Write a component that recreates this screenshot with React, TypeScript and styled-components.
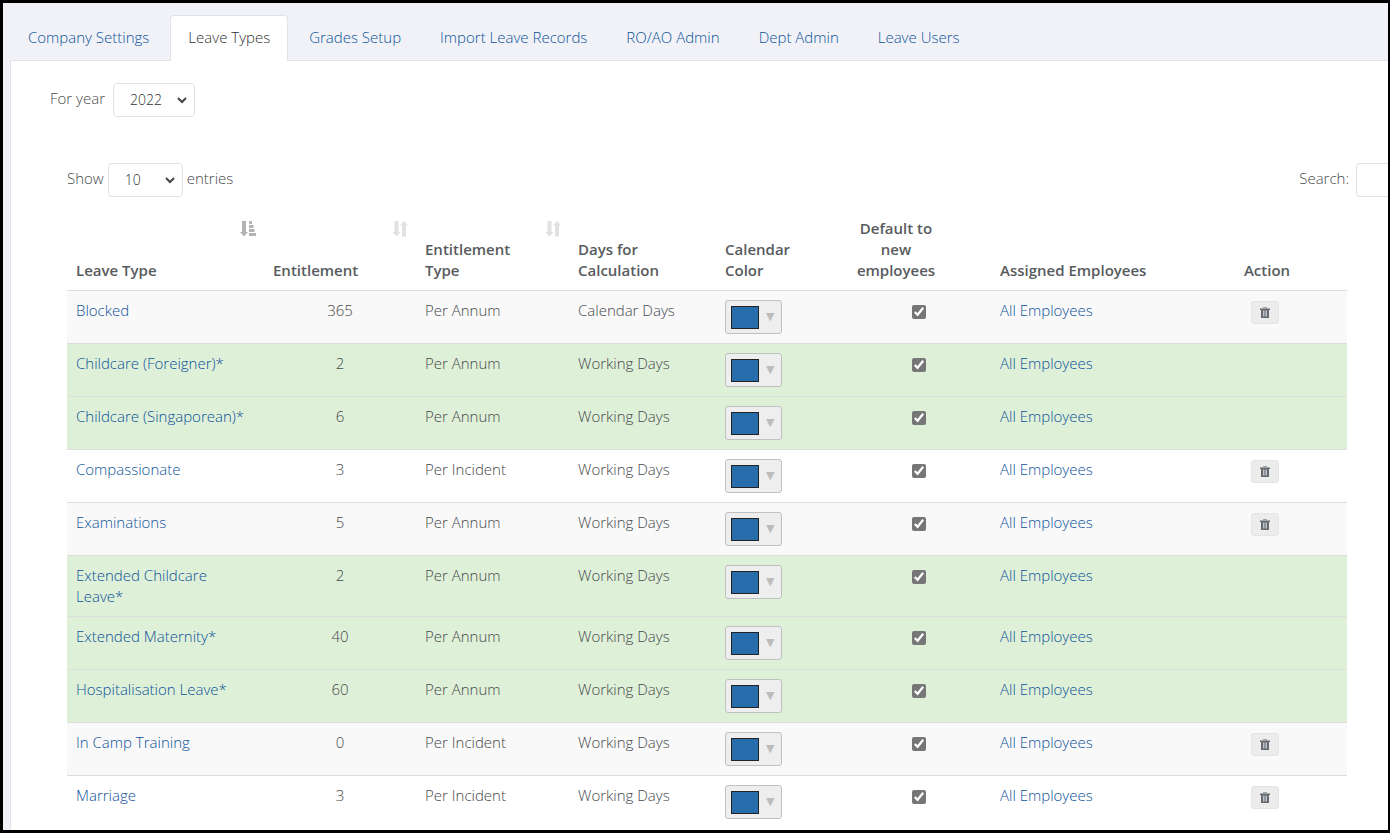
import React from "react";
import styled, { createGlobalStyle, css } from "styled-components";

const GlobalStyle = createGlobalStyle`
  *, *::before, *::after { box-sizing: border-box; }
  body {
    margin: 0;
    background: #f1f2f7;
    color: #46494c;
    font: 300 15px/21px "Open Sans", sans-serif;
  }
`;

const Page = styled.main`
  display: flex;
  flex-direction: column;
  min-height: 100vh;
  padding: 12px 0 0 7px;
  border: solid #000;
  border-width: 3px 2px 3px 3px;
  background: #f1f2f7;
  overflow: hidden;
`;

const Tabs = styled.nav`
  display: flex;
  gap: 3px;
  position: relative;
`;

const Tab = styled.a<{ $active?: boolean }>`
  padding: 11px 17px 12px;
  border: 1px solid transparent;
  border-bottom: 0;
  border-radius: 4px 4px 0 0;
  color: #0c5299;
  text-decoration: none;
  ${({ $active }) =>
    $active &&
    css`
      margin-bottom: -1px;
      border-color: #e2e3e6;
      background: #fff;
      color: #333;
    `}
`;

const Panel = styled.section`
  flex: 1;
  padding: 22px 0 0 39px;
  border: 1px solid #e2e3e6;
  border-width: 1px 0 0 1px;
  background: #fff;
`;

const Field = styled.div`
  display: flex;
  align-items: flex-start;
  label { margin-top: 5px; }
`;

const Toolbar = styled.div`
  display: flex;
  justify-content: space-between;
  margin: 46px 0 0 17px;
`;

const control = css`
  height: 34px;
  border: 1px solid #e2e2e4;
  border-radius: 4px;
  background: #fff;
  color: #333;
  font: 300 14px/20px "Open Sans", sans-serif;
`;

const SelectBox = styled.span<{ $gap: number }>`
  display: grid;
  align-items: center;
  justify-items: end;
  margin: 0 4px 0 ${({ $gap }) => $gap}px;
  > * { grid-area: 1 / 1; }
  svg {
    margin-right: 8px;
    pointer-events: none;
  }
`;

const Select = styled.select<{ $width: number }>`
  ${control}
  width: ${({ $width }) => $width}px;
  padding: 6px 12px 6px 16px;
  appearance: none;
`;

const SearchInput = styled.input`
  ${control}
  width: 32px;
  margin-left: 7px;
  border-right: 0;
  border-radius: 4px 0 0 4px;
`;

const TableArea = styled.div`
  padding: 15px 41px 0 17px;
`;

const Table = styled.table`
  width: 100%;
  border-spacing: 0;
  table-layout: fixed;
`;

const Col = styled.col<{ $width?: number }>`
  width: ${({ $width }) => ($width ? `${$width}px` : "auto")};
`;

const Th = styled.th<{ $center?: boolean; $sortable?: boolean }>`
  position: relative;
  height: 78px;
  padding: 6px ${({ $sortable }) => ($sortable ? 30 : 9)}px 9px 9px;
  color: #585b5e;
  text-align: ${({ $center }) => ($center ? "center" : "left")};
  vertical-align: bottom;
  font-weight: 600;
`;

const SortButton = styled.button<{ $active?: boolean }>`
  position: absolute;
  top: 9px;
  right: 8px;
  padding: 0;
  border: 0;
  background: none;
  color: ${({ $active }) => ($active ? "#b3b4b6" : "#e1e1e2")};
  svg { display: block; }
`;

const NarrowHeading = styled.span`
  display: block;
  width: 80px;
  text-align: center;
`;

const Row = styled.tr<{ $tone: Tone }>`
  background: ${({ $tone }) =>
    $tone === "green" ? "#dff0d8" : $tone === "grey" ? "#f9f9f9" : "#fff"};
`;

const Td = styled.td<{ $center?: boolean }>`
  height: 53px;
  padding: 9px 9px 0;
  border-top: 1px solid #ddd;
  text-align: ${({ $center }) => ($center ? "center" : "left")};
  vertical-align: top;
`;

const Link = styled.a`
  color: #0c5299;
  text-decoration: none;
`;

const LeaveName = styled(Link)`
  display: block;
  padding-bottom: 9px;
`;

const ColorButton = styled.button`
  display: flex;
  align-items: center;
  gap: 7px;
  width: 57px;
  height: 34px;
  padding: 0 5px;
  border: 1px solid #c0c0c0;
  border-radius: 3px;
  background: #eee;
  color: #bcbcbc;
  font: 11px/16px "DejaVu Sans", sans-serif;
`;

const Swatch = styled.span`
  width: 28px;
  height: 23px;
  border: 1px solid #222;
  background: #276dab;
`;

const Check = styled.input`
  display: block;
  width: 14px;
  height: 14px;
  margin: 5px auto 0;
  accent-color: #767676;
`;

const DeleteButton = styled.button`
  display: inline-flex;
  align-items: center;
  justify-content: center;
  width: 28px;
  height: 23px;
  margin: 1px 4px 0 0;
  padding: 0;
  border: 1px solid #e4e4e4;
  border-radius: 3px;
  background: #ececec;
  color: #676a6d;
`;

type Tone = "white" | "grey" | "green";

type Leave = {
  name: string;
  days: number;
  per: string;
  basis: string;
  tone: Tone;
};

const leaves: Leave[] = [
  { name: "Blocked", days: 365, per: "Per Annum", basis: "Calendar Days", tone: "grey" },
  { name: "Childcare (Foreigner)*", days: 2, per: "Per Annum", basis: "Working Days", tone: "green" },
  { name: "Childcare (Singaporean)*", days: 6, per: "Per Annum", basis: "Working Days", tone: "green" },
  { name: "Compassionate", days: 3, per: "Per Incident", basis: "Working Days", tone: "white" },
  { name: "Examinations", days: 5, per: "Per Annum", basis: "Working Days", tone: "grey" },
  { name: "Extended Childcare Leave*", days: 2, per: "Per Annum", basis: "Working Days", tone: "green" },
  { name: "Extended Maternity*", days: 40, per: "Per Annum", basis: "Working Days", tone: "green" },
  { name: "Hospitalisation Leave*", days: 60, per: "Per Annum", basis: "Working Days", tone: "green" },
  { name: "In Camp Training", days: 0, per: "Per Incident", basis: "Working Days", tone: "grey" },
  { name: "Marriage", days: 3, per: "Per Incident", basis: "Working Days", tone: "white" },
];

const tabs = [
  "Company Settings",
  "Leave Types",
  "Grades Setup",
  "Import Leave Records",
  "RO/AO Admin",
  "Dept Admin",
  "Leave Users",
];

const Chevron = () => (
  <svg width="10" height="8" viewBox="0 0 10 8" aria-hidden="true">
    <path d="M1 2l4 4 4-4" fill="none" stroke="#444" strokeWidth="2" />
  </svg>
);

const SortedIcon = () => (
  <svg width="16" height="16" viewBox="0 0 16 16" fill="currentColor" aria-hidden="true">
    <path d="M2 0h4v11h2l-4 4.500L0 11h2zM9 0h3v3H9zM9 4h4.500v3H9zM9 8h5.500v3H9zM9 12h7v3H9z" />
  </svg>
);

const UnsortedIcon = () => (
  <svg width="16" height="16" viewBox="0 0 16 16" fill="currentColor" aria-hidden="true">
    <path d="M2.500 0h4v11h2l-4 4.500L.5 11h2zM10 15.500h4v-11h2L12 0 8 4.500h2z" />
  </svg>
);

const TrashIcon = () => (
  <svg width="10" height="11" viewBox="0 0 10 11" aria-hidden="true">
    <path d="M3.500 1.500V.5h3v1" fill="none" stroke="currentColor" opacity=".6" />
    <path d="M0 1.500h10V3H0zM1 3h8v8H1z" fill="currentColor" />
    <path d="M3.500 3.500v6M5 3.500v6M6.500 3.500v6" stroke="#d4dcec" strokeWidth=".8" />
  </svg>
);

export default function App() {
  return (
    <>
      <GlobalStyle />
      <Page>
        <Tabs aria-label="Leave settings">
          {tabs.map((tab) => (
            <Tab key={tab} href="#" $active={tab === "Leave Types"}>
              {tab}
            </Tab>
          ))}
        </Tabs>
        <Panel>
          <Field>
            <label htmlFor="year">For year</label>
            <SelectBox $gap={8}>
              <Select id="year" $width={82} defaultValue="2022">
                <option>2021</option>
                <option>2022</option>
              </Select>
              <Chevron />
            </SelectBox>
          </Field>
          <Toolbar>
            <Field>
              <label htmlFor="length">Show</label>
              <SelectBox $gap={4}>
                <Select id="length" $width={75} defaultValue="10">
                  <option>10</option>
                  <option>25</option>
                </Select>
                <Chevron />
              </SelectBox>
              <label htmlFor="length">entries</label>
            </Field>
            <Field>
              <label htmlFor="search">Search:</label>
              <SearchInput id="search" type="search" />
            </Field>
          </Toolbar>
          <TableArea>
            <Table>
              <colgroup>
                <Col $width={197} />
                <Col $width={152} />
                <Col $width={153} />
                <Col $width={147} />
                <Col $width={131} />
                <Col $width={144} />
                <Col />
                <Col $width={160} />
              </colgroup>
              <thead>
                <tr>
                  <Th $sortable>
                    Leave Type
                    <SortButton $active aria-label="Sort by leave type">
                      <SortedIcon />
                    </SortButton>
                  </Th>
                  <Th $sortable>
                    Entitlement
                    <SortButton aria-label="Sort by entitlement">
                      <UnsortedIcon />
                    </SortButton>
                  </Th>
                  <Th $sortable>
                    Entitlement Type
                    <SortButton aria-label="Sort by entitlement type">
                      <UnsortedIcon />
                    </SortButton>
                  </Th>
                  <Th>Days for Calculation</Th>
                  <Th>
                    Calendar
                    <br />
                    Color
                  </Th>
                  <Th>
                    <NarrowHeading>Default to new employees</NarrowHeading>
                  </Th>
                  <Th>Assigned Employees</Th>
                  <Th $center>Action</Th>
                </tr>
              </thead>
              <tbody>
                {leaves.map((leave) => (
                  <Row key={leave.name} $tone={leave.tone}>
                    <Td>
                      <LeaveName href="#">{leave.name}</LeaveName>
                    </Td>
                    <Td $center>{leave.days}</Td>
                    <Td>{leave.per}</Td>
                    <Td>{leave.basis}</Td>
                    <Td>
                      <ColorButton aria-label={`Calendar color for ${leave.name}`}>
                        <Swatch />▼
                      </ColorButton>
                    </Td>
                    <Td>
                      <Check
                        type="checkbox"
                        defaultChecked
                        aria-label={`Default ${leave.name} to new employees`}
                      />
                    </Td>
                    <Td>
                      <Link href="#">All Employees</Link>
                    </Td>
                    <Td $center>
                      {leave.tone !== "green" && (
                        <DeleteButton aria-label={`Delete ${leave.name}`}>
                          <TrashIcon />
                        </DeleteButton>
                      )}
                    </Td>
                  </Row>
                ))}
              </tbody>
            </Table>
          </TableArea>
        </Panel>
      </Page>
    </>
  );
}
